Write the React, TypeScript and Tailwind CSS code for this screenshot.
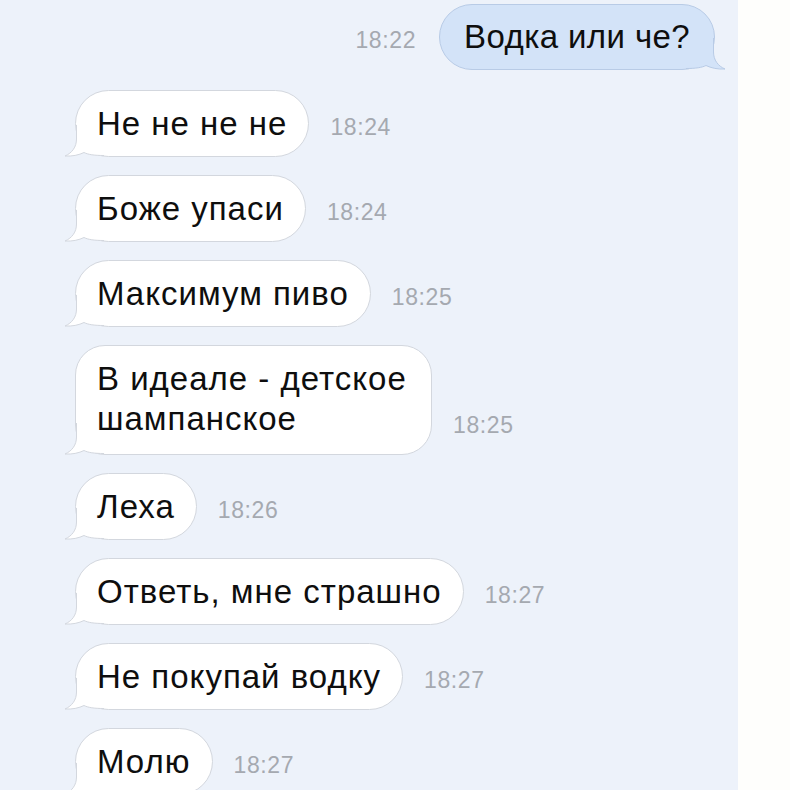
import React from "react";

const FONT = '"Liberation Sans", Arial, sans-serif';

function TailLeft() {
  return (
    <svg
      className="absolute left-[-12px] bottom-[-1px]"
      width="40"
      height="32"
      viewBox="0 0 40 32"
    >
      <path
        d="M12.5,0 L12.5,14 C12.5,22 8,28 1,31 C8,31.5 15,30 20,27.5 C24,29.5 30,30.5 40,30.5 L40,0 Z"
        fill="#ffffff"
      />
      <path
        d="M12.5,0 L12.5,14 C12.5,22 8,28 1,31 C8,31.5 15,30 20,27.5 C24,29.5 30,30.5 40,30.5"
        fill="none"
        stroke="#d3d7de"
        strokeWidth="1"
      />
    </svg>
  );
}

function TailRight() {
  return (
    <svg
      className="absolute right-[-12px] bottom-[-1px]"
      width="40"
      height="32"
      viewBox="0 0 40 32"
    >
      <g transform="translate(40,0) scale(-1,1)">
        <path
          d="M12.5,0 L12.5,14 C12.5,22 8,28 1,31 C8,31.5 15,30 20,27.5 C24,29.5 30,30.5 40,30.5 L40,0 Z"
          fill="#d3e3f8"
        />
        <path
          d="M12.5,0 L12.5,14 C12.5,22 8,28 1,31 C8,31.5 15,30 20,27.5 C24,29.5 30,30.5 40,30.5"
          fill="none"
          stroke="#b8cbe6"
          strokeWidth="1"
        />
      </g>
    </svg>
  );
}

function Time({ t }: { t: string }) {
  return (
    <span
      className="mb-[19px] shrink-0 text-[23px] leading-[22px] tracking-[0.6px] text-[#a5a9b0]"
      style={{ fontFamily: FONT }}
    >
      {t}
    </span>
  );
}

function Incoming({ text, time, wide }: { text: string; time: string; wide?: boolean }) {
  return (
    <div className="flex items-end gap-[21px]">
      <div
        className={
          "relative border border-[#d3d7de] bg-white px-[21px] pt-[13px] text-[33px] leading-[40px] text-[#0e0e0e] tracking-[1px] " +
          (wide ? "w-[357px] rounded-[30px] pb-[15px]" : "rounded-[34px] pb-[12px]")
        }
        style={{ fontFamily: FONT }}
      >
        <TailLeft />
        <span className="relative z-10">{text}</span>
      </div>
      <Time t={time} />
    </div>
  );
}

export default function App() {
  const msgs: { text: string; time: string; wide?: boolean }[] = [
    { text: "Не не не не", time: "18:24" },
    { text: "Боже упаси", time: "18:24" },
    { text: "Максимум пиво", time: "18:25" },
    { text: "В идеале - детское шампанское", time: "18:25", wide: true },
    { text: "Леха", time: "18:26" },
    { text: "Ответь, мне страшно", time: "18:27" },
    { text: "Не покупай водку", time: "18:27" },
    { text: "Молю", time: "18:27" },
  ];
  return (
    <div className="flex h-[790px] w-[790px] overflow-hidden">
      <div className="flex w-[738px] shrink-0 flex-col bg-[#edf2fa] pt-[4px] pl-[75px] pr-[23px]">
        <div className="flex items-end justify-end gap-[23px]">
          <Time t="18:22" />
          <div
            className="relative rounded-[34px] border border-[#b8cbe6] bg-[#d3e3f8] px-[24px] pt-[12px] pb-[12px] text-[33px] leading-[40px] text-[#0e0e0e] tracking-[0.4px]"
            style={{ fontFamily: FONT }}
          >
            <TailRight />
            <span className="relative z-10">Водка или че?</span>
          </div>
        </div>
        <div className="mt-[20px] flex flex-col gap-[18px]">
          {msgs.map((m, i) => (
            <Incoming key={i} text={m.text} time={m.time} wide={m.wide} />
          ))}
        </div>
      </div>
      <div className="flex-1 bg-[#fefefc]" />
    </div>
  );
}
